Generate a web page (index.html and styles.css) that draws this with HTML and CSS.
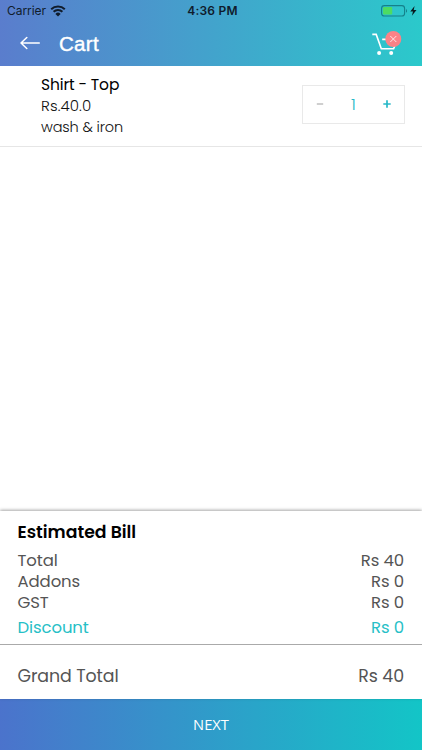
FILE: index.html
```
<!DOCTYPE html>
<html lang="en">
<head>
  <meta charset="UTF-8">
  <meta name="viewport" content="width=device-width, initial-scale=1">
  <title>Cart</title>
  <link rel="stylesheet" href="styles.css">
</head>
<body>

  <header class="header">
    <div class="status-bar">
      <div class="carrier">
        <span>Carrier</span>
        <svg class="wifi" width="16" height="12" viewBox="0 0 16 12">
          <path d="M1.2 4.3a9.7 9.7 0 0 1 13.6 0M3.6 6.8a6.2 6.2 0 0 1 8.8 0" fill="none" stroke="#101c2c" stroke-width="2"/>
          <path d="M8 11.5L5.4 8.9a3.7 3.7 0 0 1 5.2 0z" fill="#101c2c"/>
        </svg>
      </div>
      <span class="clock">4:36 PM</span>
      <svg class="battery" width="37" height="12" viewBox="0 0 37 12">
        <rect x=".6" y=".6" width="23" height="10.4" rx="2.8" fill="none" stroke="#15808a" stroke-width="1.1"/>
        <rect x="2" y="2" width="9.2" height="7.6" rx="1" fill="#4ddb62"/>
        <path d="M25 4v3.8c1.4-.6 1.4-3.2 0-3.8z" fill="#15808a"/>
        <path d="M33.6 1L29.3 6.5h2.7l-1.1 4.3 4.6-5.8h-2.8z" fill="#081a1e"/>
      </svg>
    </div>
    <div class="nav-bar">
      <svg class="back" width="20" height="14" viewBox="0 0 20 14">
        <path d="M19.3 7H1M6.8 1.5L1 7l5.8 5.5" fill="none" stroke="#fff" stroke-width="1.5" stroke-linecap="round" stroke-linejoin="round"/>
      </svg>
      <h1>Cart</h1>
      <svg class="cart" width="31" height="26" viewBox="0 0 31 26">
        <path d="M.3 4.4h3.9l5.1 14.3h12.3l1.2-3M10.2 9.4h5" fill="none" stroke="#fff" stroke-width="1.6"/>
        <circle cx="7.1" cy="23.1" r="2" fill="#fff"/>
        <circle cx="19.2" cy="23.1" r="2" fill="#fff"/>
        <circle cx="21.3" cy="9" r="8" fill="#fb8287"/>
        <path d="M18.3 6l6 6m0-6l-6 6" stroke="#ffe4e6" stroke-width="1"/>
      </svg>
    </div>
  </header>

  <main class="items">
    <div class="item">
      <div class="item-info">
        <div class="item-name">Shirt - Top</div>
        <div class="item-price">Rs.40.0</div>
        <div class="item-service">wash &amp; iron</div>
      </div>
      <div class="stepper">
        <svg width="8" height="8" viewBox="0 0 8 8"><path d="M.8 4h6.4" stroke="#b5b5b5" stroke-width="1.3"/></svg>
        <span>1</span>
        <svg width="8" height="8" viewBox="0 0 8 8"><path d="M.3 4h7.4M4 .3v7.4" stroke="#27b8c7" stroke-width="1.7"/></svg>
      </div>
    </div>
  </main>

  <section class="bill">
    <h2>Estimated Bill</h2>
    <div class="row"><span>Total</span><span>Rs 40</span></div>
    <div class="row"><span>Addons</span><span>Rs 0</span></div>
    <div class="row"><span>GST</span><span>Rs 0</span></div>
    <div class="row discount"><span>Discount</span><span>Rs 0</span></div>
    <div class="row grand"><span>Grand Total</span><span>Rs 40</span></div>
  </section>

  <button class="next">NEXT</button>

</body>
</html>
```
FILE: styles.css
```
body {
  margin: 0;
  height: 750px;
  display: flex;
  flex-direction: column;
  overflow: hidden;
  background: white;
  font-family: Poppins, Inter, sans-serif;
}

svg {
  display: block;
  flex: none;
}

.header {
  height: 66px;
  flex: none;
  background: linear-gradient(to right, #5a7dcd, #2bc9cb);
}

.status-bar {
  display: grid;
  grid-template-columns: 1fr auto 1fr;
  align-items: center;
  height: 21px;
  padding: 0 4px 0 7px;
  font-family: Inter, sans-serif;
  color: #101c2c;
}

.carrier {
  display: flex;
  align-items: center;
  gap: 4px;
  font-size: 12px;
  letter-spacing: -0.05px;
}

.clock {
  font-size: 12px;
  font-weight: 600;
  letter-spacing: 0.2px;
}

.battery {
  justify-self: end;
}

.nav-bar {
  display: flex;
  align-items: center;
  height: 44px;
  padding: 0 19px 0 20px;
}

.nav-bar h1 {
  margin: 1px auto 0 19px;
  font-family: "Liberation Sans", Arial, sans-serif;
  font-size: 20.5px;
  font-weight: normal;
  line-height: 24px;
  letter-spacing: 0.3px;
  color: white;
  -webkit-text-stroke: 0.4px white;
}

.items {
  flex: 1;
}

.item {
  display: flex;
  justify-content: space-between;
  align-items: center;
  box-sizing: border-box;
  height: 81px;
  padding: 0 17px 0 41px;
  border-bottom: 1px solid #e6e6e6;
}

.item-info {
  line-height: 21px;
  color: #111;
}

.item-name {
  font-size: 15.5px;
  letter-spacing: -0.15px;
  color: black;
}

.item-price {
  font-size: 15px;
  font-weight: 300;
  letter-spacing: 0.1px;
}

.item-service {
  padding-top: 1px;
  font-size: 14.5px;
  font-weight: 300;
  letter-spacing: -0.15px;
}

.stepper {
  display: flex;
  justify-content: space-between;
  align-items: center;
  box-sizing: border-box;
  width: 103px;
  height: 39px;
  margin-top: -4px;
  padding: 0 13px;
  border: 1px solid #e9e9e9;
  font-size: 16.5px;
  font-weight: 300;
  color: #27b8c7;
}

.bill {
  position: relative;
  height: 188px;
  flex: none;
  background: white;
  box-shadow: 0 -1px 3px rgba(0, 0, 0, 0.35);
  color: #555;
}

.bill h2 {
  margin: 0;
  padding: 10px 17.5px 7px;
  font-size: 17.3px;
  font-weight: 600;
  line-height: 22px;
  color: black;
}

.row {
  display: flex;
  justify-content: space-between;
  padding: 0 18px 0 17.5px;
  font-size: 16.5px;
  line-height: 21px;
  letter-spacing: -0.1px;
}

.discount {
  padding-top: 4px;
  padding-bottom: 6px;
  border-bottom: 1px solid #aaa;
  color: #27bfc7;
}

.grand {
  padding-top: 21px;
  font-size: 17.4px;
}

.next {
  height: 51px;
  flex: none;
  padding: 0 0 2px;
  border: none;
  background: linear-gradient(to right, #4b73cc, #13c5c7);
  font-family: "Open Sans", sans-serif;
  font-size: 14.7px;
  color: white;
}
```
